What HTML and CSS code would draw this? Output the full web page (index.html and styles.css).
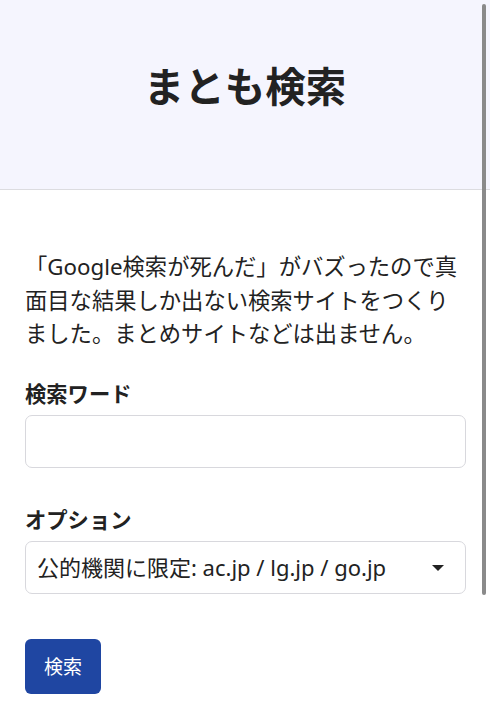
FILE: index.html
```html
<!DOCTYPE html>
<html lang="ja">
<head>
<meta charset="utf-8">
<title>まとも検索</title>
<link rel="stylesheet" href="styles.css">
</head>
<body>
<header class="site-header">
  <h1 class="site-title">まとも検索</h1>
</header>
<main class="content">
  <p class="intro">「Google検索が死んだ」がバズったので真面目な結果しか出ない検索サイトをつくりました。まとめサイトなどは出ません。</p>
  <form class="search-form">
    <label class="field-label" for="q">検索ワード</label>
    <input class="text-input" id="q" type="text">
    <label class="field-label option-label" for="opt">オプション</label>
    <div class="select-wrap">
      <select class="select-input" id="opt">
        <option>公的機関に限定: ac.jp / lg.jp / go.jp</option>
      </select>
    </div>
    <button class="submit-btn" type="button">検索</button>
  </form>
</main>
<div class="scroll-indicator"></div>
</body>
</html>
```
FILE: styles.css
```css
html, body {
  margin: 0;
  padding: 0;
  background: #ffffff;
}
body {
  font-family: "Noto Sans", "Noto Sans CJK JP", sans-serif;
  color: #222222;
  position: relative;
  min-height: 709px;
}
.site-header {
  height: 189px;
  background: #f5f5fe;
  border-bottom: 1px solid #dcdce0;
  display: flex;
  align-items: center;
  justify-content: center;
}
.site-title {
  margin: 0 0 14px 0;
  font-size: 40.5px;
  font-weight: bold;
  line-height: 1.2;
  color: #222222;
}
.content {
  padding: 0 24px 0 25px;
}
.intro {
  margin: 60px 0 27px 0;
  font-size: 22.3px;
  line-height: 33.5px;
  color: #222222;
}
.search-form {
  display: flex;
  flex-direction: column;
  align-items: stretch;
}
.field-label {
  font-size: 21.3px;
  font-weight: bold;
  line-height: 31px;
  margin-bottom: 6px;
}
.option-label {
  margin-top: 36px;
}
.text-input {
  height: 53px;
  box-sizing: border-box;
  border: 1px solid #d8d8dd;
  border-radius: 7px;
  background: #ffffff;
  font-size: 22px;
  padding: 0 12px;
  margin: 0;
  outline: none;
}
.select-wrap {
  position: relative;
}
.select-wrap::after {
  content: "";
  position: absolute;
  right: 22px;
  top: 24px;
  width: 0;
  height: 0;
  border-left: 6px solid transparent;
  border-right: 6px solid transparent;
  border-top: 6px solid #222222;
}
.select-input {
  -webkit-appearance: none;
  appearance: none;
  width: 100%;
  height: 53px;
  box-sizing: border-box;
  border: 1px solid #d8d8dd;
  border-radius: 7px;
  background: #ffffff;
  font-family: "Noto Sans", "Noto Sans CJK JP", sans-serif;
  font-size: 22px;
  color: #222222;
  padding: 0 40px 0 11px;
  margin: 0;
}
.submit-btn {
  align-self: flex-start;
  margin-top: 45px;
  width: 76px;
  height: 55px;
  border: none;
  border-radius: 6px;
  background: #1f46a2;
  color: #ffffff;
  font-family: "Noto Sans", "Noto Sans CJK JP", sans-serif;
  font-size: 19px;
  padding: 0;
}
.scroll-indicator {
  position: absolute;
  top: 4px;
  right: 4px;
  width: 4px;
  height: 591px;
  border-radius: 2px;
  background: #8a8a8a;
}
```
